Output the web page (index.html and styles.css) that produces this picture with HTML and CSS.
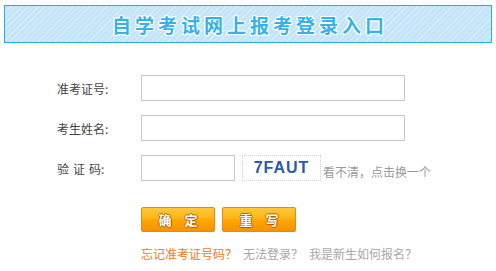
FILE: index.html
```html
<!DOCTYPE html>
<html lang="zh-CN">
<head>
  <meta charset="UTF-8" />
  <title>自学考试网上报考登录入口</title>
  <link rel="stylesheet" href="styles.css">
</head>
<body>
  <div class="header">
    <h1 class="title">自学考试网上报考登录入口</h1>
  </div>

  <form class="login-form">
    <div class="row">
      <label class="label">准考证号:</label>
      <input type="text" class="field" />
    </div>
    <div class="row">
      <label class="label">考生姓名:</label>
      <input type="text" class="field" />
    </div>
    <div class="row">
      <label class="label"><span class="spaced">验证</span>码:</label>
      <input type="text" class="field field-code" />
      <span class="captcha">7FAUT</span>
      <a class="refresh">看不清，点击换一个</a>
    </div>

    <div class="buttons">
      <button type="button" class="btn">确　定</button>
      <button type="button" class="btn">重　写</button>
    </div>

    <div class="links">
      <a class="link-orange">忘记准考证号码？</a>
      <a class="link-grey">无法登录？</a>
      <a class="link-grey">我是新生如何报名？</a>
    </div>
  </form>
</body>
</html>
```

FILE: styles.css
```css
* { box-sizing: border-box; }
body {
  margin: 0;
  padding: 5px 4px 0;
  background: #fff;
  font-family: "Noto Sans CJK SC", "Liberation Sans", sans-serif;
  font-size: 12px;
  color: #444;
}
.header {
  height: 38px;
  border: 1px solid #22b0e4;
  background-color: #c4e5f8;
  background-image: repeating-linear-gradient(135deg, #d6eefb 0, #d6eefb 1px, transparent 1px, transparent 4px);
  display: flex;
  align-items: center;
  justify-content: center;
}
.title {
  margin: 0 0 0 4px;
  font-size: 19px;
  font-weight: bold;
  letter-spacing: 4px;
  color: #36b2ea;
  text-shadow: 1px 0 0 #fff, -1px 0 0 #fff, 0 1px 0 #fff, 0 -1px 0 #fff,
    1px 1px 0 #fff, -1px -1px 0 #fff, 1px -1px 0 #fff, -1px 1px 0 #fff;
}
.login-form {
  padding: 32px 0 0 53px;
}
.row {
  display: flex;
  align-items: center;
  height: 26px;
  margin-bottom: 14px;
}
.label {
  width: 84px;
  font-size: 12px;
  color: #444;
}
.spaced {
  letter-spacing: 4px;
}
.field {
  width: 264px;
  height: 26px;
  border: 1px solid #c8c8c8;
  padding: 2px 4px;
  font-size: 12px;
}
.field-code {
  width: 94px;
}
.captcha {
  margin-left: 7px;
  width: 79px;
  height: 26px;
  border: 1px dotted #d4cce4;
  background: #fff;
  font-family: "Liberation Sans", Arial, sans-serif;
  font-weight: bold;
  font-size: 16px;
  color: #2a5aa8;
  display: flex;
  align-items: center;
  justify-content: center;
  letter-spacing: 1px;
}
.refresh {
  margin-left: 2px;
  margin-top: 6px;
  color: #9a9a9a;
  font-size: 12px;
  cursor: pointer;
}
.buttons {
  display: flex;
  gap: 7px;
  padding-left: 84px;
  margin-top: 26px;
}
.btn {
  width: 74px;
  height: 25px;
  border: 1px solid #e38a10;
  border-radius: 2px;
  background: linear-gradient(#ffc83a 0%, #ffb81a 40%, #ffa400 55%, #f59300 100%);
  color: #fff;
  font-family: "Noto Sans CJK SC", sans-serif;
  font-size: 13px;
  font-weight: bold;
  padding: 0;
  text-shadow: 1px 0 0 #b86000, -1px 0 0 #b86000, 0 1px 0 #b86000, 0 -1px 0 #b86000;
  cursor: pointer;
}
.links {
  padding-left: 84px;
  margin-top: 13px;
  display: flex;
  gap: 6px;
  font-size: 12px;
}
.link-orange { color: #f07a24; cursor: pointer; }
.link-grey { color: #a8a8a8; cursor: pointer; }
```
